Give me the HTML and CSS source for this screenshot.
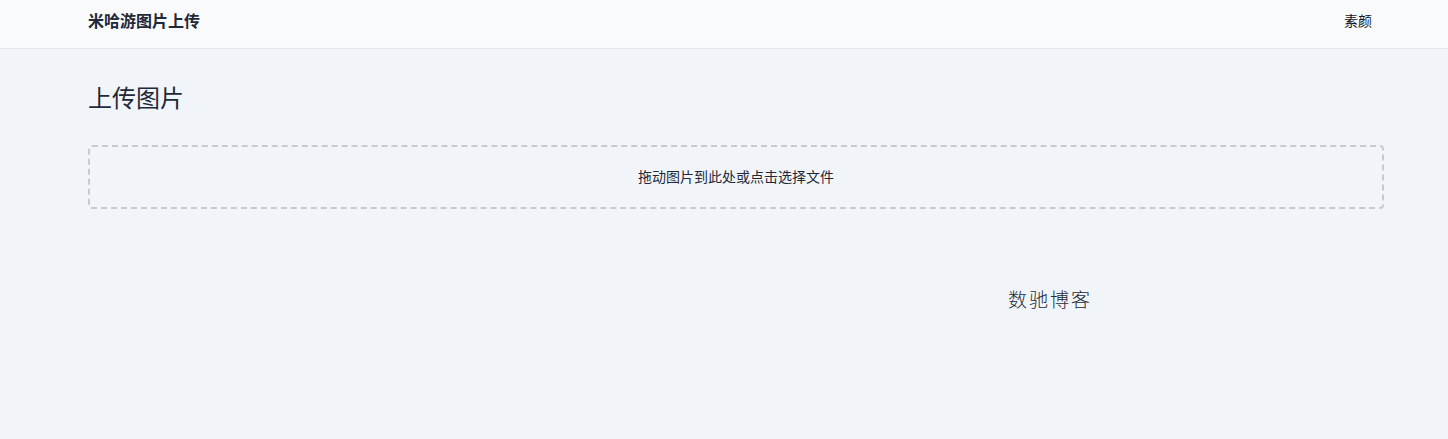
FILE: index.html
```html
<!DOCTYPE html>
<html lang="zh-CN">
<head>
<meta charset="utf-8">
<title>米哈游图片上传</title>
<link rel="stylesheet" href="styles.css">
</head>
<body>
<header class="topbar">
  <div class="topbar-inner">
    <a class="brand" href="#">米哈游图片上传</a>
    <a class="nav-link" href="#">素颜</a>
  </div>
</header>
<main class="content">
  <h1 class="title">上传图片</h1>
  <div class="dropzone">拖动图片到此处或点击选择文件</div>
  <div class="footer-row"><span class="signature">数驰博客</span></div>
</main>
</body>
</html>
```
FILE: styles.css
```css
* { box-sizing: border-box; }
html, body { margin: 0; height: 100%; }
body {
  background: #f1f5f9;
  color: #1f2937;
  font-family: "Liberation Sans", "Noto Sans CJK SC", sans-serif;
  overflow: hidden;
}
a { color: inherit; text-decoration: none; }
.topbar {
  height: 49px;
  background: #f9fafc;
  border-bottom: 1px solid #e5e7eb;
}
.topbar-inner {
  height: 39px;
  margin: 0 64px 0 88px;
  display: flex;
  align-items: center;
  justify-content: space-between;
}
.brand { font-size: 16px; font-weight: 700; }
.nav-link { font-size: 14px; padding: 1px 12px 0; color: #111827; }
.content { margin: 0 64px 0 88px; }
.title {
  margin: 0;
  padding-top: 32px;
  font-size: 24px;
  line-height: 36px;
  font-weight: 400;
}
.dropzone {
  margin-top: 28px;
  height: 64px;
  border: 2px dashed #c5cbd1;
  border-radius: 4px;
  display: flex;
  align-items: center;
  justify-content: center;
  padding-bottom: 3px;
  font-size: 14px;
  color: #1f2937;
}
.footer-row {
  display: flex;
  justify-content: flex-end;
  padding: 78px 292px 0 0;
}
.signature {
  font-size: 19px;
  line-height: 28px;
  letter-spacing: 2px;
  font-weight: 300;
  color: #1f2937;
}
```
